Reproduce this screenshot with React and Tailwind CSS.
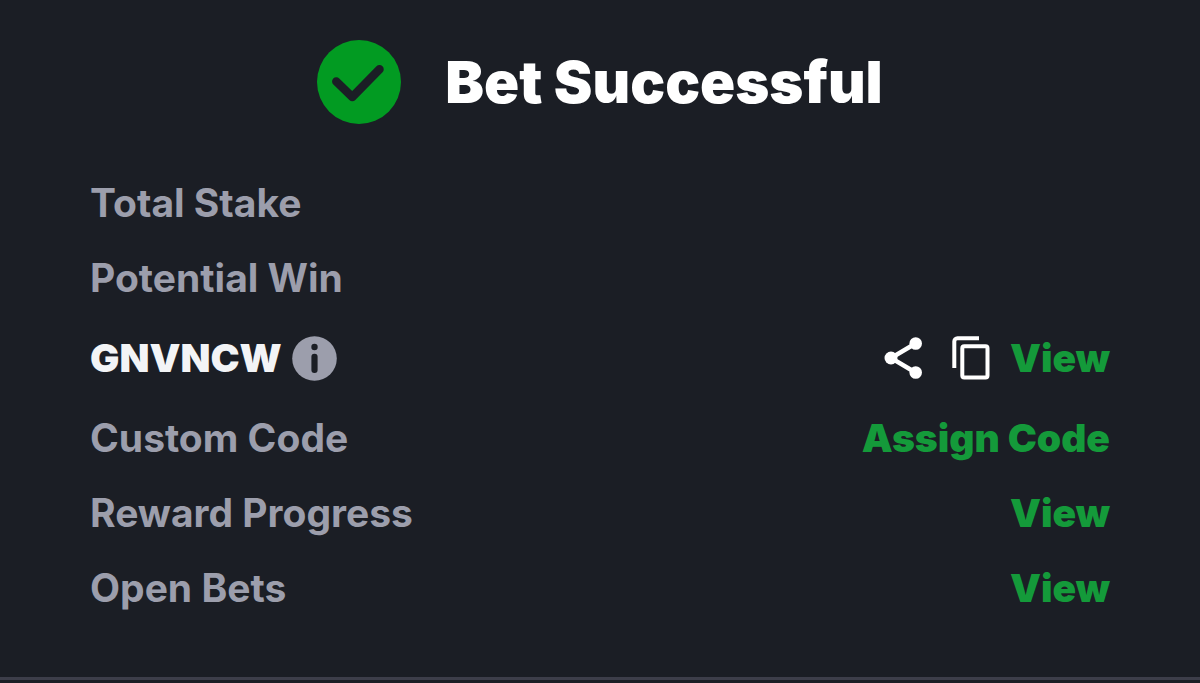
import { useId } from 'react'

const summary = ['Total Stake', 'Potential Win']

const links = [
  { label: 'Custom Code', action: 'Assign Code' },
  { label: 'Reward Progress', action: 'View' },
  { label: 'Open Bets', action: 'View' },
]

function SuccessIcon() {
  return (
    <svg viewBox="0 0 84 84" className="size-21 shrink-0" aria-hidden="true">
      <circle cx="42" cy="42" r="42" fill="#029b22" />
      <path
        d="M19.3 41.5l16 15.5L62.5 29.3"
        fill="none"
        stroke="#1b1e25"
        strokeWidth="8.5"
        strokeLinecap="round"
        strokeLinejoin="round"
      />
    </svg>
  )
}

function InfoIcon() {
  return (
    <svg viewBox="0 0 45 45" className="size-[45px]" aria-hidden="true">
      <circle cx="22.5" cy="22.5" r="22.3" fill="#9c9eac" />
      <circle cx="22.5" cy="11" r="3.2" fill="#1b1e25" />
      <rect x="19.4" y="17.8" width="6.2" height="19.2" rx="3" fill="#1b1e25" />
    </svg>
  )
}

function ShareIcon() {
  return (
    <svg viewBox="0 0 38 44" className="h-11 w-[38px]" aria-hidden="true">
      <path d="M31.5 7.5L7 22l24.5 14.5" fill="none" stroke="#fff" strokeWidth="4.4" />
      <g fill="#fff">
        <circle cx="31.7" cy="7.5" r="6.3" />
        <circle cx="7" cy="22" r="6.5" />
        <circle cx="31.7" cy="36.5" r="6.3" />
      </g>
    </svg>
  )
}

function CopyIcon() {
  return (
    <svg viewBox="0 0 38 44" className="h-11 w-[38px]" fill="none" stroke="#fff" strokeWidth="4" aria-hidden="true">
      <path d="M27 2.3H5.5a3.2 3.2 0 0 0-3.2 3.2V32" />
      <rect x="10.3" y="10.3" width="25.2" height="31.2" rx="2" />
    </svg>
  )
}

function ActionButton({ children, label }) {
  return (
    <button type="button" aria-label={label} className="cursor-pointer font-black text-[#149a3a]">
      {children}
    </button>
  )
}

export default function App() {
  const titleId = useId()

  return (
    <main className="flex min-h-screen flex-col justify-between bg-[#1b1e25] pb-[3px] font-['Inter',sans-serif] text-[39px] leading-12 font-bold text-[#9c9eac]">
      <div>
        <header className="flex items-center justify-center gap-11 pt-10">
          <SuccessIcon />
          <h1 id={titleId} className="text-[58px] leading-16 font-black text-white">
            Bet Successful
          </h1>
        </header>

        <section aria-labelledby={titleId} className="flex flex-col gap-[27px] px-[90px] pt-[55px] pb-16">
          {summary.map((label) => (
            <p key={label}>{label}</p>
          ))}

          <div className="flex items-center justify-between py-[5px]">
            <div className="flex items-center gap-2.5">
              <span className="font-black text-gray-100">GNVNCW</span>
              <button type="button" aria-label="About this code" className="cursor-pointer">
                <InfoIcon />
              </button>
            </div>
            <div className="flex items-center">
              <button type="button" aria-label="Share" className="mr-[30px] cursor-pointer">
                <ShareIcon />
              </button>
              <button type="button" aria-label="Copy code" className="mr-5 cursor-pointer">
                <CopyIcon />
              </button>
              <ActionButton>View</ActionButton>
            </div>
          </div>

          {links.map(({ label, action }) => (
            <div key={label} className="flex items-center justify-between">
              <span>{label}</span>
              <ActionButton label={`${action} ${label}`}>{action}</ActionButton>
            </div>
          ))}
        </section>
      </div>

      <hr className="border-t-3 border-[#3d3e4a]" />
    </main>
  )
}
